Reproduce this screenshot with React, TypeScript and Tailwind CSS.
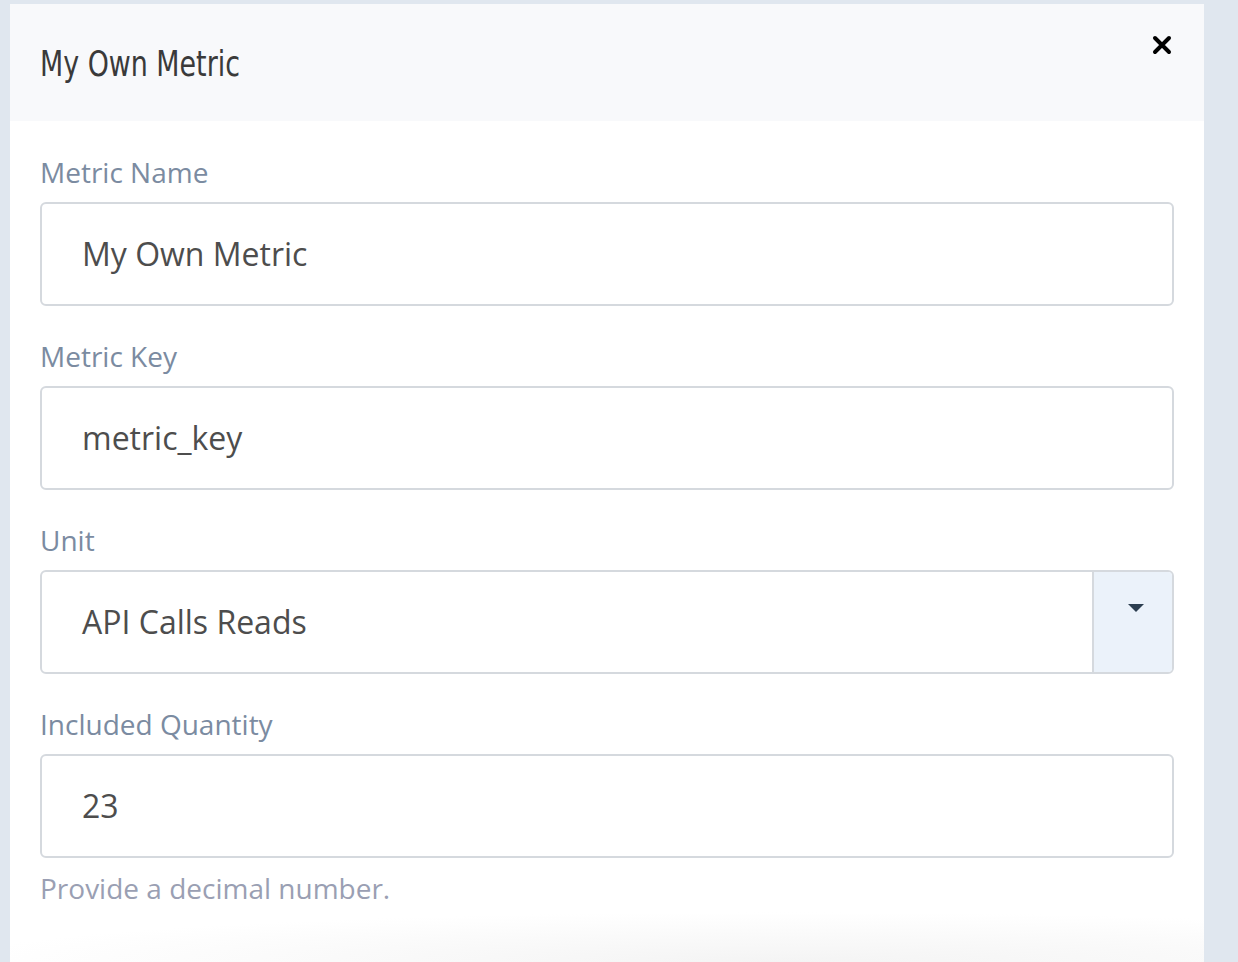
const sans = { fontFamily: '"Open Sans", "Noto Sans", sans-serif' };

function Field({ label, value, select }: { label: string; value: string; select?: boolean }) {
  return (
    <div className="flex flex-col mb-[30px]">
      <label className="h-[40px] leading-[40px] text-[28px] text-[#7b8ba1] mb-[10px]">{label}</label>
      <div className="flex h-[104px] rounded-[6px] border-2 border-[#d5d9de] bg-white overflow-hidden">
        <div className="flex-1 flex items-center pl-[40px] text-[32px] text-[#4d4d4d]">{value}</div>
        {select && (
          <div className="w-[80px] flex justify-center pt-[32px] pl-[6px] bg-[#ebf2fa] border-l-2 border-[#d5d9de]">
            <svg width="16" height="8" viewBox="0 0 16 8">
              <path d="M0 0 H16 L8 8 Z" fill="#2c3e50" />
            </svg>
          </div>
        )}
      </div>
    </div>
  );
}

export default function App() {
  return (
    <div className="w-[1238px] h-[962px] bg-[#e0e7ef] pl-[10px] pr-[34px] pt-[4px] overflow-hidden" style={sans}>
      <div className="h-full bg-white flex flex-col relative">
        <div className="h-[117px] bg-[#f8f9fb] flex items-start justify-between pl-[30px] pr-[30px]">
          <h1
            className="mt-[35px] text-[36px] leading-[50px] text-[#3a3a3a] origin-left scale-x-[0.83] whitespace-nowrap"
            style={{ fontFamily: '"Liberation Sans Narrow", "DejaVu Sans Condensed", sans-serif', fontStretch: "condensed" }}
          >
            My Own Metric
          </h1>
          <svg className="mt-[31px] mr-[2px]" width="20" height="20" viewBox="0 0 20 20">
            <path d="M3 3 L17 17 M17 3 L3 17" stroke="#000" strokeWidth="4" strokeLinecap="round" />
          </svg>
        </div>
        <div className="pt-[31px] px-[30px]">
          <Field label="Metric Name" value="My Own Metric" />
          <Field label="Metric Key" value="metric_key" />
          <Field label="Unit" value="API Calls Reads" select />
          <div className="flex flex-col">
            <label className="h-[40px] leading-[40px] text-[28px] text-[#7b8ba1] mb-[10px]">Included Quantity</label>
            <div className="flex h-[104px] rounded-[6px] border-2 border-[#d5d9de] bg-white items-center pl-[40px] text-[32px] text-[#4d4d4d]">
              23
            </div>
            <p className="mt-[10px] h-[40px] leading-[40px] text-[28px] text-[#9a9fb3]">Provide a decimal number.</p>
          </div>
        </div>
        <div className="absolute left-0 right-0 bottom-0 h-[50px] bg-[radial-gradient(ellipse_70%_100%_at_65%_100%,#f4f4f4,#ffffff)]" />
      </div>
    </div>
  );
}
